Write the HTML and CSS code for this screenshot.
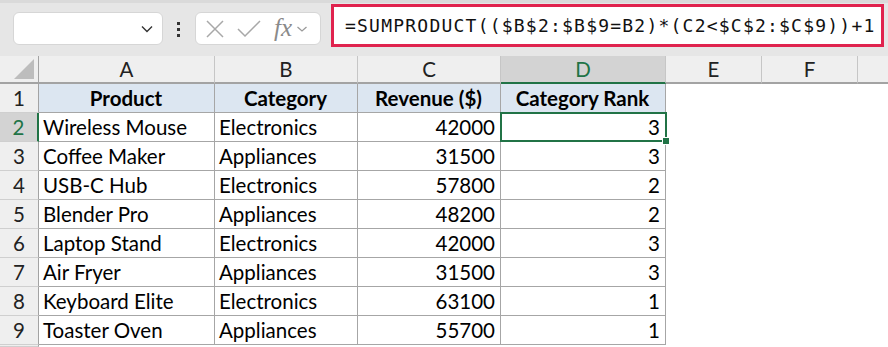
FILE: index.html
```html
<!DOCTYPE html>
<html>
<head>
<meta charset="utf-8">
<link rel="stylesheet" href="styles.css">
</head>
<body>
<div class="toolbar">
  <div class="namebox">
    <svg class="chev" width="14" height="10" viewBox="0 0 14 10"><path d="M2 2.5 L7 7.5 L12 2.5" fill="none" stroke="#333" stroke-width="1.4"/></svg>
  </div>
  <div class="dots"><span></span><span></span><span></span></div>
  <div class="fxbox">
    <svg width="20" height="20" viewBox="0 0 20 20" class="ico-x"><path d="M2 2 L18 18 M18 2 L2 18" stroke="#a8a8a8" stroke-width="1.5" fill="none"/></svg>
    <svg width="24" height="20" viewBox="0 0 24 20" class="ico-check"><path d="M1 10 L8 17 L23 2" stroke="#a8a8a8" stroke-width="1.5" fill="none"/></svg>
    <span class="fx">fx</span>
    <svg width="12" height="8" viewBox="0 0 12 8" class="ico-chev"><path d="M1.5 2 L6 6 L10.5 2" stroke="#9a9a9a" stroke-width="1.3" fill="none"/></svg>
  </div>
  <div class="formula">=SUMPRODUCT(($B$2:$B$9=B2)*(C2&lt;$C$2:$C$9))+1</div>
</div>
<div class="sheet">
  <div class="grid">
    <div class="ch corner"><span class="tri"></span></div>
    <div class="ch">A</div>
    <div class="ch">B</div>
    <div class="ch">C</div>
    <div class="ch sel">D</div>
    <div class="ch">E</div>
    <div class="ch">F</div>
    <div class="ch last"></div>

    <div class="rh">1</div>
    <div class="c hd">Product</div>
    <div class="c hd">Category</div>
    <div class="c hd">Revenue ($)</div>
    <div class="c hd">Category Rank</div>
    <div class="e"></div><div class="e"></div><div class="e"></div>

    <div class="rh sel">2</div>
    <div class="c">Wireless Mouse</div>
    <div class="c">Electronics</div>
    <div class="c n">42000</div>
    <div class="c n">3</div>
    <div class="e"></div><div class="e"></div><div class="e"></div>

    <div class="rh">3</div>
    <div class="c">Coffee Maker</div>
    <div class="c">Appliances</div>
    <div class="c n">31500</div>
    <div class="c n">3</div>
    <div class="e"></div><div class="e"></div><div class="e"></div>

    <div class="rh">4</div>
    <div class="c">USB-C Hub</div>
    <div class="c">Electronics</div>
    <div class="c n">57800</div>
    <div class="c n">2</div>
    <div class="e"></div><div class="e"></div><div class="e"></div>

    <div class="rh">5</div>
    <div class="c">Blender Pro</div>
    <div class="c">Appliances</div>
    <div class="c n">48200</div>
    <div class="c n">2</div>
    <div class="e"></div><div class="e"></div><div class="e"></div>

    <div class="rh">6</div>
    <div class="c">Laptop Stand</div>
    <div class="c">Electronics</div>
    <div class="c n">42000</div>
    <div class="c n">3</div>
    <div class="e"></div><div class="e"></div><div class="e"></div>

    <div class="rh">7</div>
    <div class="c">Air Fryer</div>
    <div class="c">Appliances</div>
    <div class="c n">31500</div>
    <div class="c n">3</div>
    <div class="e"></div><div class="e"></div><div class="e"></div>

    <div class="rh">8</div>
    <div class="c">Keyboard Elite</div>
    <div class="c">Electronics</div>
    <div class="c n">63100</div>
    <div class="c n">1</div>
    <div class="e"></div><div class="e"></div><div class="e"></div>

    <div class="rh">9</div>
    <div class="c">Toaster Oven</div>
    <div class="c">Appliances</div>
    <div class="c n">55700</div>
    <div class="c n">1</div>
    <div class="e"></div><div class="e"></div><div class="e"></div>

    <div class="rh"></div>
  </div>
  <div class="selbox"><span class="handle"></span></div>
</div>
</body>
</html>
```

FILE: styles.css
```css
html, body {
  margin: 0;
  padding: 0;
  background: #ffffff;
}
body {
  width: 888px;
  height: 347px;
  overflow: hidden;
  font-family: Lato, "Liberation Sans", sans-serif;
}
.toolbar {
  height: 56px;
  box-sizing: border-box;
  background: #e6e6e6;
  border-top: 3px solid #dadada;
  display: flex;
  align-items: flex-start;
  padding-left: 13px;
}
.namebox {
  margin-top: 9px;
  width: 150px;
  height: 33px;
  box-sizing: border-box;
  background: #fff;
  border: 1px solid #d6d6d6;
  border-radius: 6px;
  display: flex;
  align-items: center;
  justify-content: flex-end;
  padding-right: 8px;
}
.dots {
  margin-top: 19px;
  margin-left: 14px;
  width: 4px;
  display: flex;
  flex-direction: column;
  gap: 3px;
}
.dots span {
  width: 3px;
  height: 3px;
  background: #333;
}
.fxbox {
  margin-top: 9px;
  margin-left: 14px;
  width: 126px;
  height: 33px;
  box-sizing: border-box;
  background: #fff;
  border: 1px solid #d6d6d6;
  border-radius: 6px;
  display: flex;
  align-items: center;
  padding-left: 9px;
}
.ico-x { margin-right: 12px; }
.ico-check { margin-right: 13px; margin-top: 1px; }
.fx {
  font-family: "Liberation Serif", serif;
  font-style: italic;
  font-size: 25px;
  color: #8a8a8a;
  line-height: 1;
  margin-top: -3px;
  margin-right: 4px;
}
.formula {
  margin-top: 1px;
  margin-left: 10px;
  width: 553px;
  height: 43px;
  box-sizing: border-box;
  border: 3px solid #e0234e;
  background: #fff;
  padding-left: 11px;
  font-family: "DejaVu Sans Mono", monospace;
  font-size: 18px;
  letter-spacing: 1.22px;
  color: #111;
  display: flex;
  align-items: center;
  white-space: nowrap;
}
.sheet {
  position: relative;
}
.grid {
  display: grid;
  grid-template-columns: 39px 176px 143px 143px 165px 96px 96px 1fr;
  grid-template-rows: 28px repeat(9, 29px) 2px;
  font-size: 20.5px;
  color: #000;
}
.grid > div {
  box-sizing: border-box;
  display: flex;
  align-items: center;
  white-space: nowrap;
  overflow: hidden;
}
.ch {
  background: #efefef;
  border-right: 1px solid #c6c6c6;
  border-bottom: 2px solid #a3a3a3;
  justify-content: center;
  color: #222;
}
.ch.last { border-right: none; }
.ch.sel {
  background: #d3d3d3;
  color: #217346;
  border-bottom: 2px solid #217346;
}
.corner {
  position: relative;
  border-right: 1px solid #a3a3a3;
}
.tri {
  position: absolute;
  right: 4px;
  bottom: 3px;
  width: 0;
  height: 0;
  border-left: 20px solid transparent;
  border-bottom: 20px solid #bdbdbd;
}
.rh {
  background: #efefef;
  border-right: 1px solid #a3a3a3;
  border-bottom: 1px solid #cfcfcf;
  justify-content: center;
  color: #222;
}
.rh.sel {
  background: #d3d3d3;
  color: #217346;
  border-right: 2px solid #217346;
}
.c {
  border-right: 1px solid #a6a6a6;
  border-bottom: 1px solid #a6a6a6;
  padding: 0 5px 0 4px;
}
.c.hd {
  background: #dce6f1;
  font-weight: bold;
  justify-content: center;
}
.c.n { justify-content: flex-end; }
.e { background: #fff; }
.selbox {
  position: absolute;
  left: 500px;
  top: 56px;
  width: 167px;
  height: 30px;
  box-sizing: border-box;
  border: 2px solid #217346;
}
.handle {
  position: absolute;
  right: -5px;
  bottom: -5px;
  width: 6px;
  height: 6px;
  background: #217346;
  border: 1px solid #fff;
}
```
